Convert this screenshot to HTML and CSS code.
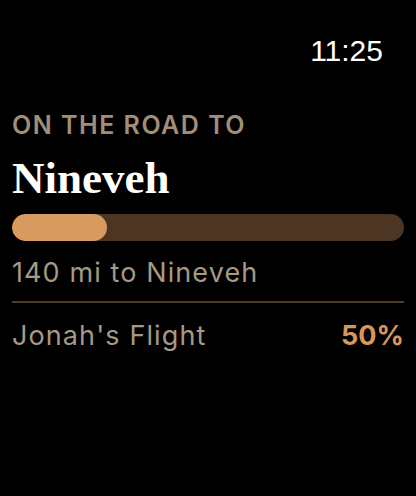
FILE: index.html
```html
<!DOCTYPE html>
<html>
<head>
<meta charset="utf-8">
<link rel="stylesheet" href="styles.css">
</head>
<body>
<div class="screen">
  <div class="status"><span class="time">11:25</span></div>
  <div class="content">
    <div class="label">ON THE ROAD TO</div>
    <div class="title">Nineveh</div>
    <div class="track"><div class="fill" style="width: 24.2%"></div></div>
    <div class="distance">140 mi to Nineveh</div>
    <div class="divider"></div>
    <div class="row">
      <span class="name">Jonah's Flight</span>
      <span class="pct">50%</span>
    </div>
  </div>
</div>
</body>
</html>
```
FILE: styles.css
```css
html, body {
  margin: 0;
  padding: 0;
  background: #000;
}
.screen {
  width: 416px;
  height: 496px;
  background: #000;
  font-family: Inter, "Liberation Sans", sans-serif;
}
.status {
  display: flex;
  justify-content: flex-end;
  padding: 33px 33px 0 0;
  height: 36px;
}
.time {
  color: #fff;
  font-family: "Liberation Sans", Arial, sans-serif;
  font-size: 30px;
  line-height: 36px;
  font-weight: 400;
}
.content {
  padding: 0 12px;
  display: flex;
  flex-direction: column;
}
.label {
  margin-top: 41px;
  color: #a08f76;
  font-size: 25px;
  line-height: 30px;
  font-weight: 600;
  letter-spacing: 1.5px;
}
.title {
  margin-top: 13px;
  color: #fff;
  font-family: "Liberation Serif", serif;
  font-weight: 700;
  font-size: 45px;
  line-height: 50px;
}
.track {
  margin-top: 11px;
  height: 27px;
  border-radius: 14px;
  background: #4d3524;
  overflow: hidden;
}
.fill {
  height: 100%;
  border-radius: 14px;
  background: #d89a5e;
}
.distance {
  margin-top: 16px;
  color: #a69985;
  font-size: 27px;
  line-height: 32px;
  letter-spacing: 1.1px;
}
.divider {
  margin-top: 12px;
  height: 2px;
  background: #4a3d30;
}
.row {
  margin-top: 17px;
  display: flex;
  justify-content: space-between;
  font-size: 27px;
  line-height: 32px;
}
.name {
  color: #a69985;
  letter-spacing: 1.1px;
}
.pct {
  color: #d8975a;
  font-weight: 700;
}
```
